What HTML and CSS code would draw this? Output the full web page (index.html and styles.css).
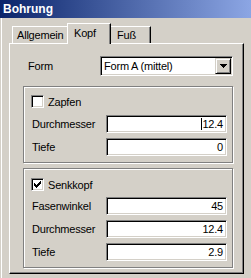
FILE: index.html
```html
<!DOCTYPE html>
<html>
<head>
<meta charset="utf-8">
<link rel="stylesheet" href="styles.css">
</head>
<body>
<div class="titlebar">Bohrung</div>
<div class="content">
  <div class="tabs">
    <div class="tab tab-first">Allgemein</div>
    <div class="tab tab-active">Kopf</div>
    <div class="tab tab-last">Fuß</div>
  </div>
  <div class="pane">
    <div class="form-row">
      <span class="form-label">Form</span>
      <div class="select">
        <span class="select-text">Form A (mittel)</span>
        <span class="select-btn"><svg width="7" height="4" viewBox="0 0 7 4" shape-rendering="crispEdges"><path d="M0 0h7v1H0zM1 1h5v1H1zM2 2h3v1H2zM3 3h1v1H3z" fill="#000"/></svg></span>
      </div>
    </div>
    <div class="group group-first">
      <div class="check-row"><span class="checkbox"></span><span>Zapfen</span></div>
      <div class="field field-first"><span class="field-label">Durchmesser</span><div class="edit"><span class="caret"></span>12.4</div></div>
      <div class="field"><span class="field-label">Tiefe</span><div class="edit">0</div></div>
    </div>
    <div class="group group-second">
      <div class="check-row"><span class="checkbox"><svg width="7" height="7" viewBox="0 0 7 7" shape-rendering="crispEdges"><path d="M6 0h1v3H6zM5 1h1v3H5zM4 2h1v3H4zM0 2h1v3H0zM1 3h1v3H1zM3 3h1v3H3zM2 4h1v3H2z" fill="#000"/></svg></span><span>Senkkopf</span></div>
      <div class="field field-first"><span class="field-label">Fasenwinkel</span><div class="edit">45</div></div>
      <div class="field"><span class="field-label">Durchmesser</span><div class="edit">12.4</div></div>
      <div class="field"><span class="field-label">Tiefe</span><div class="edit">2.9</div></div>
    </div>
  </div>
</div>
</body>
</html>
```
FILE: styles.css
```css
html, body {
  margin: 0;
  padding: 0;
}
body {
  background: #d4d0c8;
  font-family: "Liberation Sans", Arial, sans-serif;
  font-size: 11px;
  letter-spacing: -0.2px;
  color: #000;
  width: 251px;
  height: 278px;
  overflow: hidden;
}
.titlebar {
  height: 18px;
  line-height: 18px;
  padding-left: 3px;
  background: linear-gradient(to right, #0a246a, #8ca6e4);
  color: #fff;
  font-weight: bold;
  font-size: 12px;
  letter-spacing: 0;
}
.content {
  margin-left: 1px;
  border-left: 1px solid #fff;
  padding: 0 7px;
  height: 260px;
}
.tabs {
  display: flex;
  align-items: flex-end;
  height: 25px;
  padding-left: 3px;
}
.tab {
  box-sizing: border-box;
  height: 17px;
  line-height: 16px;
  border-top: 1px solid #fff;
  border-left: 1px solid #fff;
  border-right: 1px solid #000;
  box-shadow: inset -1px 0 #808080;
  background: #d4d0c8;
  white-space: nowrap;
}
.tab-first {
  width: 57px;
  padding-left: 4px;
}
.tab-active {
  position: relative;
  z-index: 1;
  width: 44px;
  height: 21px;
  line-height: 19px;
  margin: 0 -2px -1px -2px;
  padding-left: 6px;
}
.tab-last {
  width: 42px;
  padding-left: 7px;
}
.pane {
  box-sizing: border-box;
  height: 231px;
  border-top: 1px solid #fff;
  border-left: 1px solid #fff;
  border-right: 1px solid #000;
  border-bottom: 1px solid #000;
  box-shadow: inset -1px -1px #808080;
  overflow: hidden;
}
.form-row {
  display: flex;
  align-items: center;
  height: 20px;
  margin-top: 12px;
  padding-left: 18px;
}
.form-label {
  width: 72px;
}
.select {
  box-sizing: border-box;
  width: 133px;
  height: 20px;
  display: flex;
  align-items: center;
  justify-content: space-between;
  background: #fff;
  border-top: 1px solid #808080;
  border-left: 1px solid #808080;
  border-right: 1px solid #fff;
  border-bottom: 1px solid #fff;
  box-shadow: inset 1px 1px #000, inset -1px -1px #d4d0c8;
  padding: 1px;
}
.select-text {
  padding-left: 2px;
}
.select-btn {
  box-sizing: border-box;
  width: 16px;
  height: 16px;
  display: flex;
  align-items: center;
  justify-content: center;
  background: #d4d0c8;
  border-top: 1px solid #d4d0c8;
  border-left: 1px solid #d4d0c8;
  border-right: 1px solid #000;
  border-bottom: 1px solid #000;
  box-shadow: inset 1px 1px #fff, inset -1px -1px #808080;
}
.select-btn svg {
  display: block;
}
.group {
  box-sizing: border-box;
  width: 210px;
  margin-left: 13px;
  border: 1px solid #808080;
  box-shadow: inset 1px 1px #fff, 1px 1px #fff;
  padding: 8px 4px 6px 7px;
}
.group-first {
  margin-top: 10px;
}
.group-second {
  margin-top: 5px;
  padding-top: 9px;
}
.check-row {
  display: flex;
  align-items: center;
  gap: 4px;
  height: 13px;
}
.checkbox {
  box-sizing: border-box;
  width: 13px;
  height: 13px;
  display: flex;
  align-items: center;
  justify-content: center;
  background: #fff;
  border-top: 1px solid #808080;
  border-left: 1px solid #808080;
  border-right: 1px solid #fff;
  border-bottom: 1px solid #fff;
  box-shadow: inset 1px 1px #000, inset -1px -1px #d4d0c8;
}
.checkbox svg {
  display: block;
}
.field {
  display: flex;
  align-items: center;
  height: 18px;
  margin-top: 5px;
}
.field-first {
  margin-top: 7px;
}
.group-second .field-first {
  margin-top: 6px;
}
.field-label {
  width: 74px;
  padding-left: 1px;
}
.edit {
  box-sizing: border-box;
  width: 121px;
  height: 18px;
  line-height: 14px;
  text-align: right;
  padding: 1px 3px 0 0;
  background: #fff;
  border-top: 1px solid #808080;
  border-left: 1px solid #808080;
  border-right: 1px solid #fff;
  border-bottom: 1px solid #fff;
  box-shadow: inset 1px 1px #000, inset -1px -1px #d4d0c8;
}
.caret {
  display: inline-block;
  width: 1px;
  height: 12px;
  background: #000;
  vertical-align: -2px;
  margin-right: 0;
}
```
